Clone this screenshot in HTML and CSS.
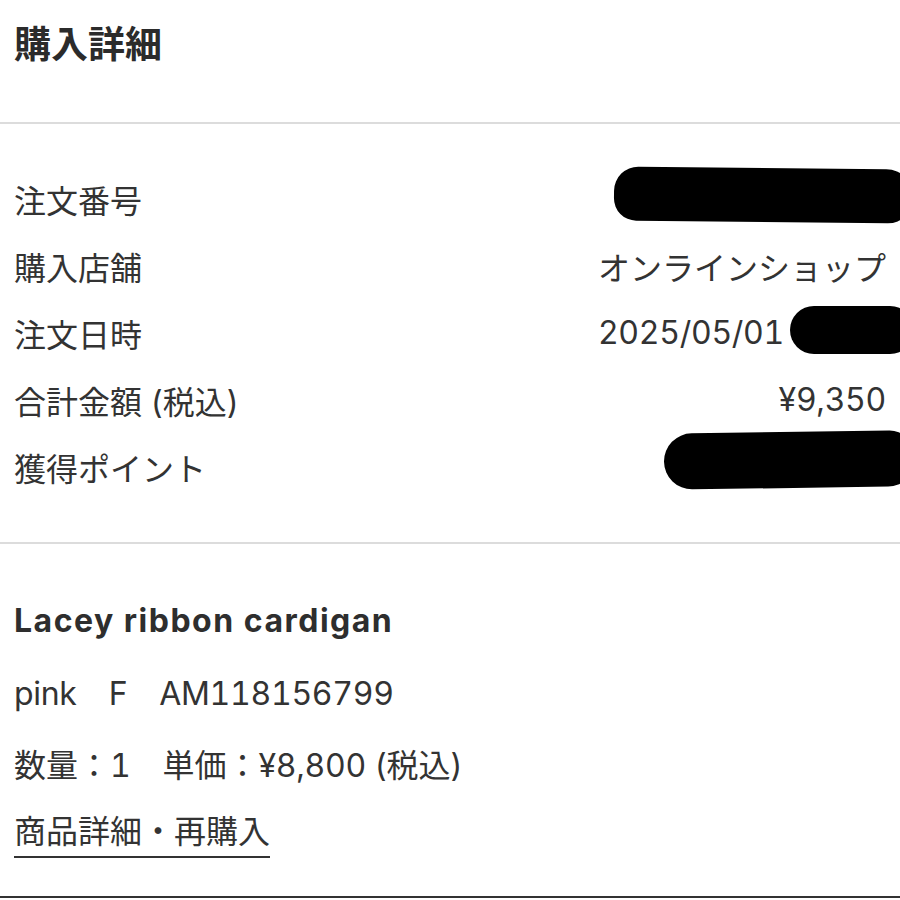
FILE: index.html
```html
<!DOCTYPE html>
<html lang="ja">
<head>
<meta charset="utf-8">
<link rel="stylesheet" href="styles.css">
</head>
<body>
<div class="page">
  <header class="head">
    <h1 class="title">購入詳細</h1>
  </header>
  <section class="info">
    <div class="row"><span class="label">注文番号</span><span class="value"><span class="blot blot-order"></span></span></div>
    <div class="row"><span class="label">購入店舗</span><span class="value">オンラインショップ</span></div>
    <div class="row"><span class="label">注文日時</span><span class="value"><span class="en">2025/05/01</span><span class="blot blot-time"></span></span></div>
    <div class="row"><span class="label">合計金額 (税込)</span><span class="value"><span class="en">¥9,350</span></span></div>
    <div class="row"><span class="label">獲得ポイント</span><span class="value"><span class="blot blot-point"></span></span></div>
  </section>
  <section class="item">
    <div class="item-name">Lacey ribbon cardigan</div>
    <div class="item-line"><span class="en">pink</span><span class="sp"></span><span class="en">F</span><span class="sp"></span><span class="en">AM118156799</span></div>
    <div class="item-line">数量：<span class="en">1</span><span class="sp"></span>単価：<span class="en">¥8,800</span> (税込)</div>
    <div class="item-link-wrap"><a class="item-link">商品詳細・再購入</a></div>
  </section>
</div>
</body>
</html>
```

FILE: styles.css
```css
html, body {
  margin: 0;
  padding: 0;
  background: #fff;
}
body {
  font-family: "Inter", "Noto Sans CJK JP", sans-serif;
  color: #333;
}
.page {
  width: 900px;
  height: 900px;
  overflow: hidden;
}
.head {
  height: 124px;
  border-bottom: 2px solid #dcdcdc;
  box-sizing: border-box;
  padding: 0 14px;
  display: flex;
  align-items: flex-start;
}
.title {
  margin: 0;
  margin-top: 23px;
  font-size: 37px;
  line-height: 44px;
  font-weight: 700;
  color: #2b2b2b;
}
.info {
  padding: 42px 14px 42px 14px;
  border-bottom: 2px solid #dcdcdc;
  box-sizing: border-box;
  height: 420px;
}
.row {
  display: flex;
  justify-content: space-between;
  align-items: center;
  height: 66.8px;
  font-size: 32px;
}
.label {
  white-space: nowrap;
}
.value {
  display: flex;
  align-items: center;
  white-space: nowrap;
}
.en {
  font-variant-numeric: tabular-nums;
  letter-spacing: -0.3px;
}
.blot {
  display: inline-block;
  background: #000;
  border-radius: 30px;
}
.blot-order {
  width: 300px;
  height: 54px;
  margin-right: -28px;
  margin-top: -8px;
  border-radius: 26px 30px 28px 24px;
  transform: rotate(0.6deg);
}
.blot-time {
  width: 124px;
  height: 48px;
  margin-left: 6px;
  margin-right: -28px;
  margin-top: -6px;
  border-radius: 24px;
}
.blot-point {
  width: 250px;
  height: 56px;
  margin-right: -28px;
  margin-top: -14px;
  border-radius: 30px 26px 28px 30px;
  transform: rotate(-0.8deg);
}
.item {
  padding: 40px 14px 0 14px;
  height: 354px;
  box-sizing: border-box;
  border-bottom: 2px solid #333;
}
.item-name {
  font-size: 32px;
  font-weight: 700;
  line-height: 74px;
  letter-spacing: 1.5px;
  color: #2e2e2e;
}
.item-line {
  font-size: 32px;
  line-height: 72px;
}
.sp {
  display: inline-block;
  width: 32px;
}
.item-link-wrap {
  margin-top: 0px;
  font-size: 32px;
  line-height: 40px;
  padding-top: 10px;
}
.item-link {
  display: inline-block;
  border-bottom: 2px solid #333;
  padding-bottom: 4px;
  color: #333;
  text-decoration: none;
}
```
